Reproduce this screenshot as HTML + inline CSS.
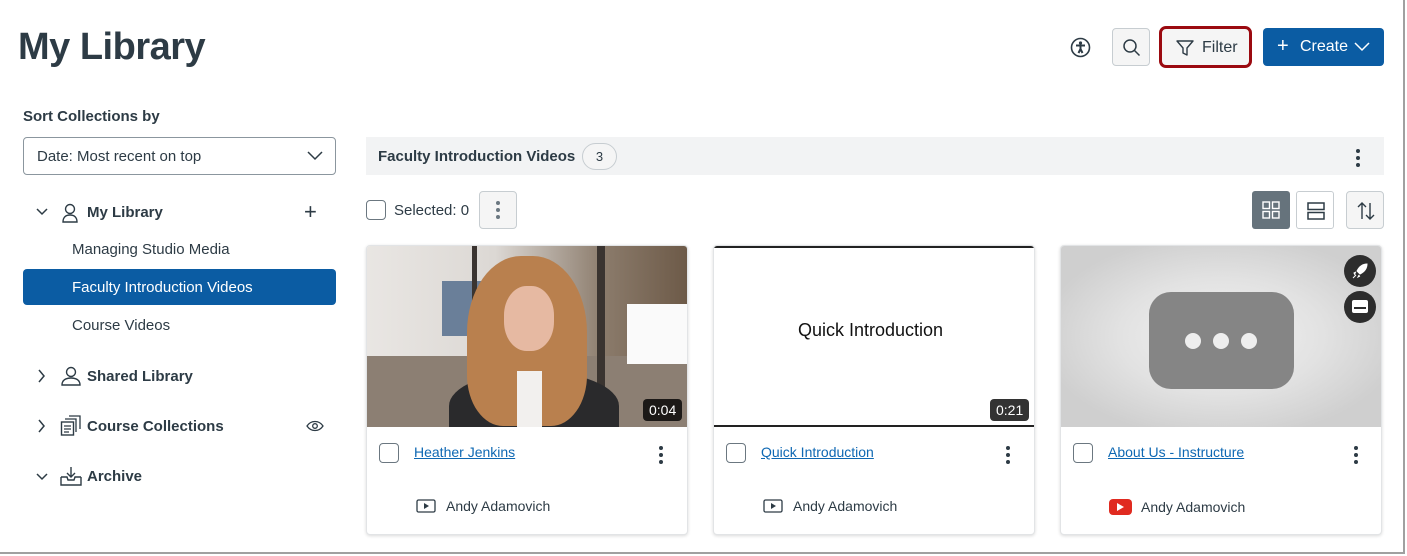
<!DOCTYPE html>
<html><head><style>
*{box-sizing:border-box;margin:0;padding:0}
body{width:1407px;height:556px;background:#fff;font-family:"Liberation Sans",sans-serif;color:#2d3b45;position:relative;overflow:hidden}
.abs{position:absolute}
.frame{position:absolute;left:0;top:0;width:1405px;height:554px;border-right:2px solid #a0a0a0;border-bottom:2px solid #a0a0a0}
h1{position:absolute;left:18px;top:26px;font-size:38px;font-weight:bold;letter-spacing:-0.5px}
.btn{position:absolute;border:1px solid #c7cdd1;background:#f5f5f5;border-radius:4px}
.t{position:absolute;white-space:nowrap}
.card{position:absolute;top:245px;width:322px;height:290px;border:1px solid #e2e4e6;border-radius:4px;box-shadow:0 1px 3px rgba(0,0,0,.15);background:#fff;overflow:hidden}
.thumb{position:absolute;left:0;top:0;width:100%;height:181px;overflow:hidden}
.cb{position:absolute;width:20px;height:20px;border:1px solid #6b7780;border-radius:4px;background:#fff}
.link{position:absolute;font-size:14px;color:#0e68b3;text-decoration:underline;white-space:nowrap}
.kebab{position:absolute;width:4px}
.kebab i{display:block;width:4px;height:4px;border-radius:2px;background:#2d3b45;margin-bottom:3px}
.auth{position:absolute;font-size:14px;white-space:nowrap}
.dur{position:absolute;background:rgba(0,0,0,.8);color:#fff;font-size:14px;padding:3px 6px;border-radius:4px}
</style></head><body>
<div class="frame"></div>
<h1>My Library</h1>

<svg class="abs" style="left:1070px;top:37px" width="21" height="21" viewBox="0 0 21 21"><circle cx="10.5" cy="10.5" r="9" fill="none" stroke="#2d3b45" stroke-width="1.6"/><circle cx="10.5" cy="6" r="1.6" fill="#2d3b45"/><path d="M6 8.5h9M10.5 8.5v4M8.5 16l2-4 2 4" stroke="#2d3b45" stroke-width="2" fill="none"/></svg>
<div class="btn" style="left:1112px;top:28px;width:38px;height:38px"><svg class="abs" style="left:9px;top:9px" width="20" height="20"><circle cx="8" cy="8" r="6" fill="none" stroke="#2d3b45" stroke-width="1.5"/><path d="M12.5 12.5l5 5" stroke="#2d3b45" stroke-width="1.5"/></svg></div>
<div class="abs" style="left:1159px;top:26px;width:93px;height:42px;border:3px solid #9b0a10;border-radius:7px;background:#f5f5f5"><svg class="abs" style="left:13px;top:9px" width="20" height="20"><path d="M2 3h16l-6 7v7l-4-2v-5z" fill="none" stroke="#2d3b45" stroke-width="1.4" stroke-linejoin="round"/></svg><span class="t" style="left:40px;top:10px;font-size:16px">Filter</span></div>
<div class="abs" style="left:1263px;top:28px;width:121px;height:38px;background:#0b5ca3;border-radius:4px;color:#fff"><span class="t" style="left:14px;top:7px;font-size:20px;font-weight:300">+</span><span class="t" style="left:37px;top:10px;font-size:16px">Create</span><svg class="abs" style="left:91px;top:14px" width="16" height="10"><path d="M1 1l7 7 7-7" fill="none" stroke="#fff" stroke-width="1.5"/></svg></div>

<div class="t" style="left:23px;top:108px;font-size:15px;font-weight:bold">Sort Collections by</div>
<div class="abs" style="left:23px;top:137px;width:313px;height:38px;border:1px solid #8b969e;border-radius:4px"><span class="t" style="left:13px;top:10px;font-size:15px">Date: Most recent on top</span><svg class="abs" style="left:283px;top:13px" width="16" height="10"><path d="M1 1l7 7 7-7" fill="none" stroke="#2d3b45" stroke-width="1.5"/></svg></div>

<svg class="abs" style="left:36px;top:207px" width="12" height="10"><path d="M1 2l5 5 5-5" fill="none" stroke="#2d3b45" stroke-width="1.5"/></svg>
<svg class="abs" style="left:60px;top:202px" width="20" height="22"><circle cx="10" cy="7" r="4.5" fill="none" stroke="#2d3b45" stroke-width="1.4"/><path d="M3 20c0-5 3-7 7-7s7 2 7 7z" fill="none" stroke="#2d3b45" stroke-width="1.4"/></svg>
<div class="t" style="left:87px;top:204px;font-size:15px;font-weight:bold">My Library</div>
<div class="t" style="left:304px;top:199px;font-size:22px;font-weight:300">+</div>
<div class="t" style="left:72px;top:241px;font-size:15px">Managing Studio Media</div>
<div class="abs" style="left:23px;top:269px;width:313px;height:36px;background:#0b5ca3;border-radius:4px"></div>
<div class="t" style="left:72px;top:279px;font-size:15px;color:#fff">Faculty Introduction Videos</div>
<div class="t" style="left:72px;top:317px;font-size:15px">Course Videos</div>

<svg class="abs" style="left:37px;top:369px" width="10" height="14"><path d="M2 1l5 6-5 6" fill="none" stroke="#2d3b45" stroke-width="1.5"/></svg>
<svg class="abs" style="left:60px;top:365px" width="22" height="22"><circle cx="11" cy="7" r="4.5" fill="none" stroke="#2d3b45" stroke-width="1.4"/><path d="M2 20c0-5 4-7 9-7s9 2 9 7z" fill="none" stroke="#2d3b45" stroke-width="1.4"/></svg>
<div class="t" style="left:87px;top:368px;font-size:15px;font-weight:bold">Shared Library</div>
<svg class="abs" style="left:37px;top:419px" width="10" height="14"><path d="M2 1l5 6-5 6" fill="none" stroke="#2d3b45" stroke-width="1.5"/></svg>
<svg class="abs" style="left:60px;top:415px" width="22" height="22"><rect x="1.5" y="7" width="12" height="13" fill="none" stroke="#2d3b45" stroke-width="1.4"/><path d="M5 4h11v13M9 1h11v13M4 11h7M4 14h7M4 17h5" fill="none" stroke="#2d3b45" stroke-width="1.3"/></svg>
<div class="t" style="left:87px;top:418px;font-size:15px;font-weight:bold">Course Collections</div>
<svg class="abs" style="left:306px;top:420px" width="18" height="12"><path d="M1 6c4-6 12-6 16 0-4 6-12 6-16 0z" fill="none" stroke="#2d3b45" stroke-width="1.3"/><circle cx="9" cy="6" r="2.3" fill="none" stroke="#2d3b45" stroke-width="1.3"/></svg>
<svg class="abs" style="left:36px;top:472px" width="12" height="10"><path d="M1 2l5 5 5-5" fill="none" stroke="#2d3b45" stroke-width="1.5"/></svg>
<svg class="abs" style="left:60px;top:465px" width="22" height="22"><path d="M1 12v8h20v-8M1 12h6l1 3h6l1-3h6M11 2v10M7 8l4 4 4-4" fill="none" stroke="#2d3b45" stroke-width="1.4"/></svg>
<div class="t" style="left:87px;top:468px;font-size:15px;font-weight:bold">Archive</div>

<div class="abs" style="left:366px;top:137px;width:1018px;height:38px;background:#f2f3f4"></div>
<div class="t" style="left:378px;top:148px;font-size:15px;font-weight:bold">Faculty Introduction Videos</div>
<div class="abs" style="left:582px;top:143px;width:35px;height:27px;border:1px solid #c7cdd1;border-radius:14px;background:#f5f5f5;font-size:13px;text-align:center;line-height:25px">3</div>
<div class="kebab" style="left:1356px;top:149px"><i></i><i></i><i></i></div>

<div class="cb" style="left:366px;top:200px"></div>
<div class="t" style="left:394px;top:202px;font-size:15px">Selected: 0</div>
<div class="btn" style="left:479px;top:191px;width:38px;height:38px"></div>
<div class="kebab" style="left:496px;top:201px"><i style="background:#6b7780"></i><i style="background:#6b7780"></i><i style="background:#6b7780"></i></div>

<div class="abs" style="left:1252px;top:191px;width:38px;height:38px;background:#66737c;border-radius:3px"><svg class="abs" style="left:10px;top:10px" width="18" height="18"><g fill="none" stroke="#fff" stroke-width="1.4"><rect x="1" y="1" width="6.5" height="6.5"/><rect x="10.5" y="1" width="6.5" height="6.5"/><rect x="1" y="10.5" width="6.5" height="6.5"/><rect x="10.5" y="10.5" width="6.5" height="6.5"/></g></svg></div>
<div class="abs" style="left:1296px;top:191px;width:38px;height:38px;border:1px solid #c7cdd1;border-radius:3px;background:#fff"><svg class="abs" style="left:10px;top:10px" width="18" height="18"><g fill="none" stroke="#2d3b45" stroke-width="1.5"><rect x="1" y="1" width="16" height="6.5"/><rect x="1" y="10.5" width="16" height="6.5"/></g></svg></div>
<div class="btn" style="left:1346px;top:191px;width:38px;height:38px"><svg class="abs" style="left:9px;top:9px" width="20" height="20"><path d="M6 18V2M2 6l4-4 4 4M14 2v16M10 14l4 4 4-4" fill="none" stroke="#2d3b45" stroke-width="1.4"/></svg></div>

<!-- card 1 -->
<div class="card" style="left:366px">
 <div class="thumb" style="background:linear-gradient(90deg,#e9e6e3 0%,#dcd8d4 40%,#8a7a6a 75%,#6d5a48 100%)">
  <div class="abs" style="left:0;top:110px;width:322px;height:71px;background:#8c7f73"></div>
  <div class="abs" style="left:75px;top:35px;width:45px;height:55px;background:#6a7f99"></div>
  <div class="abs" style="left:260px;top:58px;width:62px;height:60px;background:#fafafa"></div>
  <div class="abs" style="left:230px;top:0;width:8px;height:181px;background:#3a3430"></div>
  <div class="abs" style="left:105px;top:0;width:5px;height:70px;background:#3a3430"></div>
  <div class="abs" style="left:82px;top:125px;width:170px;height:70px;background:#2a2a2c;border-radius:50% 50% 0 0"></div>
  <div class="abs" style="left:100px;top:10px;width:120px;height:170px;background:#b9804e;border-radius:45% 45% 30% 30%"></div>
  <div class="abs" style="left:137px;top:40px;width:50px;height:65px;background:#e6b9a2;border-radius:45%"></div>
  <div class="abs" style="left:150px;top:125px;width:25px;height:56px;background:#f2f0ee"></div>
 </div>
 <div class="dur" style="left:276px;top:153px">0:04</div>
 <div class="cb" style="left:12px;top:197px"></div>
 <div class="link" style="left:47px;top:198px">Heather Jenkins</div>
 <div class="kebab" style="left:292px;top:200px"><i></i><i></i><i></i></div>
 <svg class="abs" style="left:49px;top:252px" width="20" height="16"><rect x="1" y="2" width="18" height="12" rx="1.5" fill="none" stroke="#2d3b45" stroke-width="1.3"/><path d="M8 5l5 3-5 3z" fill="#2d3b45"/></svg>
 <div class="auth" style="left:79px;top:252px">Andy Adamovich</div>
</div>

<!-- card 2 -->
<div class="card" style="left:713px">
 <div class="thumb" style="background:#fff;border-top:2px solid #222;border-bottom:2px solid #222">
  <div class="t" style="left:84px;top:72px;font-size:18px;color:#111">Quick Introduction</div>
 </div>
 <div class="dur" style="left:276px;top:153px">0:21</div>
 <div class="cb" style="left:12px;top:197px"></div>
 <div class="link" style="left:47px;top:198px">Quick Introduction</div>
 <div class="kebab" style="left:292px;top:200px"><i></i><i></i><i></i></div>
 <svg class="abs" style="left:49px;top:252px" width="20" height="16"><rect x="1" y="2" width="18" height="12" rx="1.5" fill="none" stroke="#2d3b45" stroke-width="1.3"/><path d="M8 5l5 3-5 3z" fill="#2d3b45"/></svg>
 <div class="auth" style="left:79px;top:252px">Andy Adamovich</div>
</div>

<!-- card 3 -->
<div class="card" style="left:1060px">
 <div class="thumb" style="background:radial-gradient(ellipse at 50% 50%,#f2f2f2 0%,#e2e2e2 45%,#cfcfcf 80%)">
  <div class="abs" style="left:88px;top:46px;width:145px;height:97px;background:#858585;border-radius:22px"></div>
  <div class="abs" style="left:124px;top:87px;width:16px;height:16px;border-radius:8px;background:#eee"></div>
  <div class="abs" style="left:152px;top:87px;width:16px;height:16px;border-radius:8px;background:#eee"></div>
  <div class="abs" style="left:180px;top:87px;width:16px;height:16px;border-radius:8px;background:#eee"></div>
  <div class="abs" style="left:283px;top:9px;width:32px;height:32px;border-radius:16px;background:#2d2d2d"><svg class="abs" style="left:8px;top:8px" width="16" height="16"><path d="M15 1c-5 0-8 3-10 7l3 3c4-2 7-5 7-10zM4 9l-2 1 1 2M7 12l-1 2 2-1M4 12l-3 3" fill="#fff" stroke="#fff" stroke-width="1"/></svg></div>
  <div class="abs" style="left:283px;top:45px;width:32px;height:32px;border-radius:16px;background:#2d2d2d"><div class="abs" style="left:8px;top:9px;width:16px;height:13px;background:#fff;border-radius:2px"></div><div class="abs" style="left:10px;top:16px;width:12px;height:1.5px;background:#2d2d2d"></div></div>
 </div>
 <div class="cb" style="left:12px;top:197px"></div>
 <div class="link" style="left:47px;top:198px">About Us - Instructure</div>
 <div class="kebab" style="left:293px;top:200px"><i></i><i></i><i></i></div>
 <div class="abs" style="left:48px;top:253px;width:23px;height:16px;background:#e02a20;border-radius:4px"><svg class="abs" style="left:8px;top:4px" width="8" height="8"><path d="M0 0l7 4-7 4z" fill="#fff"/></svg></div>
 <div class="auth" style="left:80px;top:253px">Andy Adamovich</div>
</div>
</body></html>
